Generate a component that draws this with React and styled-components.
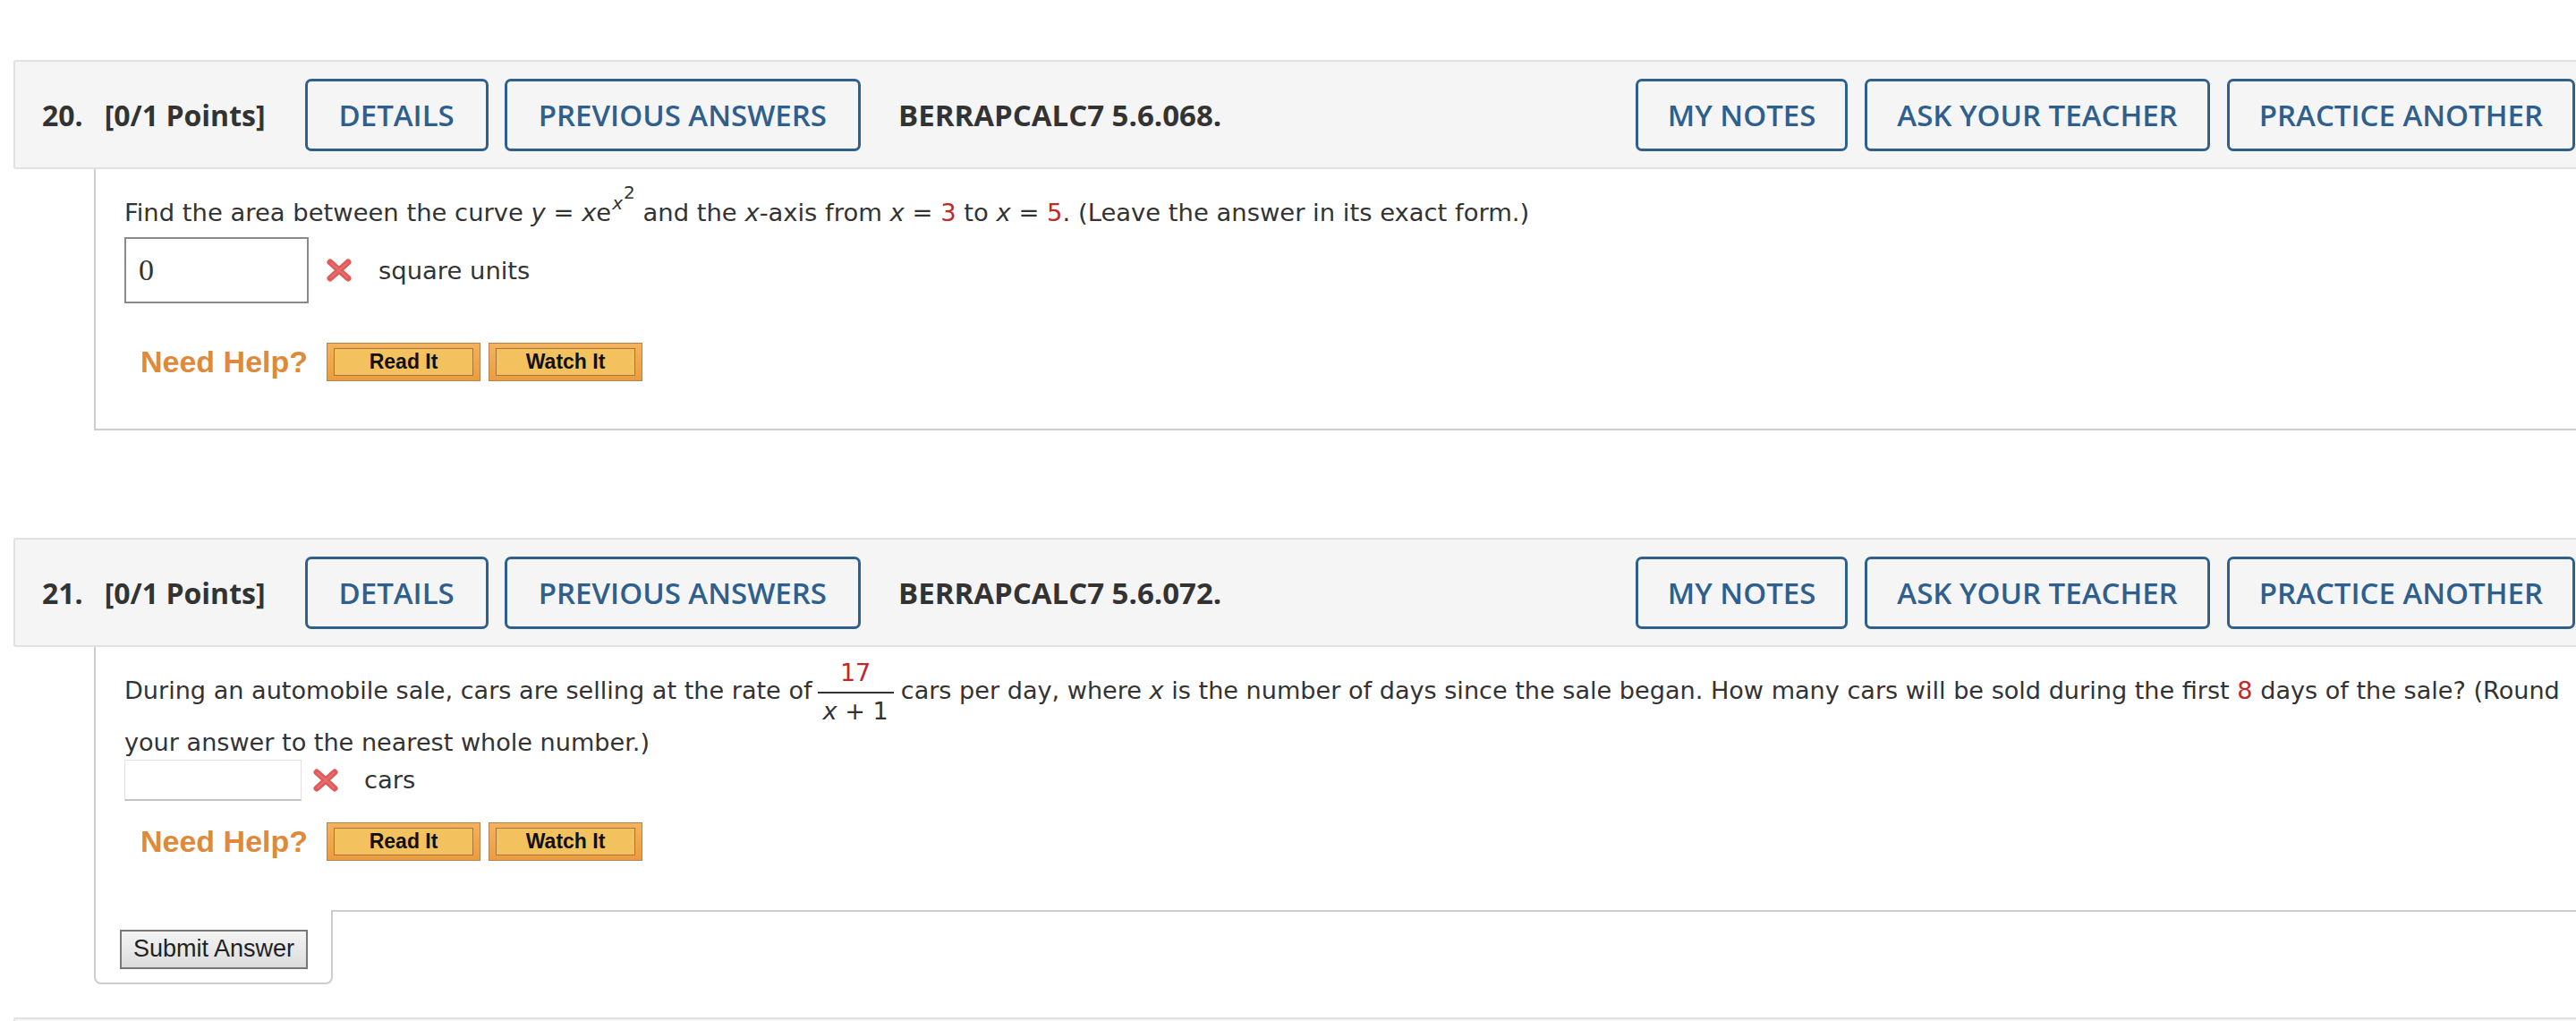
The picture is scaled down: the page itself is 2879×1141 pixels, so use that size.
import React from 'react'
import styled, { createGlobalStyle } from 'styled-components'

const GlobalStyle = createGlobalStyle`
  html, body {
    margin: 0;
    padding: 0;
    background: #fff;
    overflow: hidden;
  }
`

const Page = styled.div`
  width: 2880px;
  padding: 67px 0 0 15px;
`

const QuestionBlock = styled.div`
  margin-bottom: ${(p) => p.gap || 0}px;
`

const Header = styled.div`
  display: flex;
  align-items: center;
  box-sizing: border-box;
  height: 122px;
  background: #f5f5f5;
  border: 2px solid #e1e1e1;
  border-right: none;
  border-radius: 3px 0 0 3px;
  padding: 0 17px 0 30px;
  font-family: 'Open Sans', sans-serif;
  color: #333;
`

const Number = styled.span`
  font-size: 32px;
  font-weight: 700;
  margin-right: 24px;
`

const Points = styled.span`
  font-size: 32px;
  font-weight: 700;
  margin-right: 44px;
`

const Code = styled.span`
  font-size: 33px;
  font-weight: 700;
  margin-left: 42px;
`

const HeaderButton = styled.button`
  display: inline-flex;
  align-items: center;
  box-sizing: border-box;
  height: 81px;
  padding: 0 ${(p) => (p.tight ? 33 : 35)}px;
  margin-left: ${(p) => p.offset || 0}px;
  background: transparent;
  border: 3px solid #2f5f8d;
  border-radius: 7px;
  color: #2f5f8d;
  font-family: 'Open Sans', sans-serif;
  font-size: 33px;
  font-weight: 600;
  white-space: nowrap;
`

const RightGroup = styled.div`
  display: flex;
  gap: 19px;
  margin-left: auto;
`

const Content = styled.div`
  margin: 0 -40px 0 90px;
  border-left: 2px solid #cdcdcd;
  border-bottom: ${(p) => (p.closed ? '2px solid #cdcdcd' : 'none')};
  padding: 0 32px;
  font-family: 'DejaVu Sans', Verdana, sans-serif;
  font-size: 27.4px;
  color: #333;
`

const Prompt = styled.div`
  padding-top: ${(p) => p.top || 0}px;
  line-height: ${(p) => p.lh || 'normal'};
  font-size: ${(p) => p.size || 27.4}px;
`

const Var = styled.i`
  font-style: italic;
`

const Red = styled.span`
  color: #c1272d;
`

const Sup = styled.span`
  display: inline-block;
  font-size: 20px;
  vertical-align: 13px;
  margin-left: 1px;
  line-height: normal;
`

const SupInner = styled.span`
  display: inline-block;
  vertical-align: 12px;
  margin-left: 1px;
`

const Fraction = styled.span`
  display: inline-flex;
  flex-direction: column;
  align-items: center;
  vertical-align: 20px;
  margin: 0 8px 0 6px;
  line-height: 1.1;
`

const Numerator = styled.span`
  align-self: stretch;
  text-align: center;
  color: #c1272d;
  padding-bottom: 6px;
  border-bottom: 2px solid #333;
`

const Denominator = styled.span`
  padding: 5px 6px 0;
`

const AnswerRow = styled.div`
  display: flex;
  align-items: center;
  margin-top: ${(p) => p.top || 0}px;
`

const AnswerBox = styled.div`
  box-sizing: border-box;
  width: ${(p) => p.w}px;
  height: ${(p) => p.h}px;
  display: flex;
  align-items: center;
  padding-left: 14px;
  border: ${(p) => (p.bold ? '2px solid #8a8a8a' : '1px solid #e2e2e2')};
  border-bottom: ${(p) => (p.bold ? '2px solid #8a8a8a' : '2px solid #c4c4c4')};
  font-family: 'Liberation Serif', serif;
  font-size: 34px;
  color: #333;
`

const WrongMark = styled.svg`
  width: 30px;
  height: 26px;
  margin: 0 ${(p) => p.after || 28}px 0 ${(p) => p.before || 18}px;
  flex-shrink: 0;
`

const Unit = styled.span`
  font-size: 27.4px;
`

const HelpRow = styled.div`
  display: flex;
  align-items: center;
  padding-left: 18px;
  margin-top: ${(p) => p.top || 0}px;
  padding-bottom: ${(p) => p.bottom || 0}px;
`

const HelpLabel = styled.span`
  font-family: 'Liberation Sans', Arial, sans-serif;
  font-weight: 700;
  font-size: 34px;
  color: #e0893a;
  margin-right: 21px;
`

const HelpButton = styled.button`
  box-sizing: border-box;
  width: 172px;
  height: 43px;
  margin-right: 9px;
  padding: 5px 7px;
  background: linear-gradient(#f3b35c, #ec9c3e);
  border: 1px solid #b8804a;
  display: flex;
  align-items: stretch;
`

const HelpInner = styled.span`
  flex: 1;
  display: flex;
  align-items: center;
  justify-content: center;
  background: #f4c15f;
  border: 1px solid #a87540;
  font-family: 'Liberation Sans', Arial, sans-serif;
  font-weight: 700;
  font-size: 23px;
  color: #111;
`

const SubmitRow = styled.div`
  display: flex;
  margin-left: 90px;
`

const SubmitTab = styled.div`
  box-sizing: border-box;
  width: 267px;
  height: 83px;
  padding: 22px 0 0 27px;
  border: 2px solid #cdcdcd;
  border-top: none;
  border-radius: 0 0 8px 8px;
`

const SubmitFiller = styled.div`
  flex: 1;
  border-top: 2px solid #cdcdcd;
`

const SubmitButton = styled.button`
  box-sizing: border-box;
  width: 210px;
  height: 44px;
  padding: 0;
  background: linear-gradient(#f4f4f4, #dcdcdc);
  border: 2px solid #777;
  font-family: 'Liberation Sans', Arial, sans-serif;
  font-size: 27px;
  color: #222;
`

const NextHeader = styled.div`
  margin-top: 37px;
  height: 40px;
  background: #f5f5f5;
  border-top: 2px solid #e1e1e1;
  border-left: 2px solid #e1e1e1;
  border-radius: 3px 0 0 0;
`

const Cross = ({ before, after }) => (
  <WrongMark viewBox="0 0 30 26" before={before} after={after}>
    <path
      d="M5 4 L25 22 M25 4 L5 22"
      stroke="#e05a5a"
      strokeWidth="7"
      strokeLinecap="round"
    />
    <path
      d="M6 5 L24 21 M24 5 L6 21"
      stroke="#ee7b7b"
      strokeWidth="2"
      strokeLinecap="round"
      opacity="0.6"
    />
  </WrongMark>
)

const QuestionHeader = ({ num, code }) => (
  <Header>
    <Number>{num}.</Number>
    <Points>[0/1 Points]</Points>
    <HeaderButton>DETAILS</HeaderButton>
    <HeaderButton offset={18}>PREVIOUS ANSWERS</HeaderButton>
    <Code>{code}</Code>
    <RightGroup>
      <HeaderButton tight>MY NOTES</HeaderButton>
      <HeaderButton tight>ASK YOUR TEACHER</HeaderButton>
      <HeaderButton tight>PRACTICE ANOTHER</HeaderButton>
    </RightGroup>
  </Header>
)

const NeedHelp = ({ top, bottom }) => (
  <HelpRow top={top} bottom={bottom}>
    <HelpLabel>Need Help?</HelpLabel>
    <HelpButton>
      <HelpInner>Read It</HelpInner>
    </HelpButton>
    <HelpButton>
      <HelpInner>Watch It</HelpInner>
    </HelpButton>
  </HelpRow>
)

const App = () => (
  <Page>
    <GlobalStyle />
    <QuestionBlock gap={120}>
      <QuestionHeader num="20" code="BERRAPCALC7 5.6.068." />
      <Content closed>
        <Prompt top={14}>
          Find the area between the curve <Var>y</Var> = <Var>x</Var>e
          <Sup>
            <Var>x</Var>
            <SupInner>2</SupInner>
          </Sup>{' '}
          and the <Var>x</Var>-axis from <Var>x</Var> = <Red>3</Red> to <Var>x</Var> ={' '}
          <Red>5</Red>. (Leave the answer in its exact form.)
        </Prompt>
        <AnswerRow top={12}>
          <AnswerBox bold w={206} h={74}>
            0
          </AnswerBox>
          <Cross before={19} after={29} />
          <Unit>square units</Unit>
        </AnswerRow>
        <NeedHelp top={44} bottom={53} />
      </Content>
    </QuestionBlock>

    <QuestionBlock>
      <QuestionHeader num="21" code="BERRAPCALC7 5.6.072." />
      <Content>
        <Prompt top={14} lh="1.45" size={27.1}>
          During an automobile sale, cars are selling at the rate of
          <Fraction>
            <Numerator>17</Numerator>
            <Denominator>
              <Var>x</Var> + 1
            </Denominator>
          </Fraction>
          cars per day, where <Var>x</Var> is the number of days since the sale began. How
          many cars will be sold during the first <Red>8</Red> days of the sale? (Round your
          answer to the nearest whole number.)
        </Prompt>
        <AnswerRow top={0}>
          <AnswerBox w={198} h={46} />
          <Cross before={12} after={28} />
          <Unit>cars</Unit>
        </AnswerRow>
        <NeedHelp top={24} bottom={55} />
      </Content>
      <SubmitRow>
        <SubmitTab>
          <SubmitButton>Submit Answer</SubmitButton>
        </SubmitTab>
        <SubmitFiller />
      </SubmitRow>
    </QuestionBlock>
    <NextHeader />
  </Page>
)

export default App
